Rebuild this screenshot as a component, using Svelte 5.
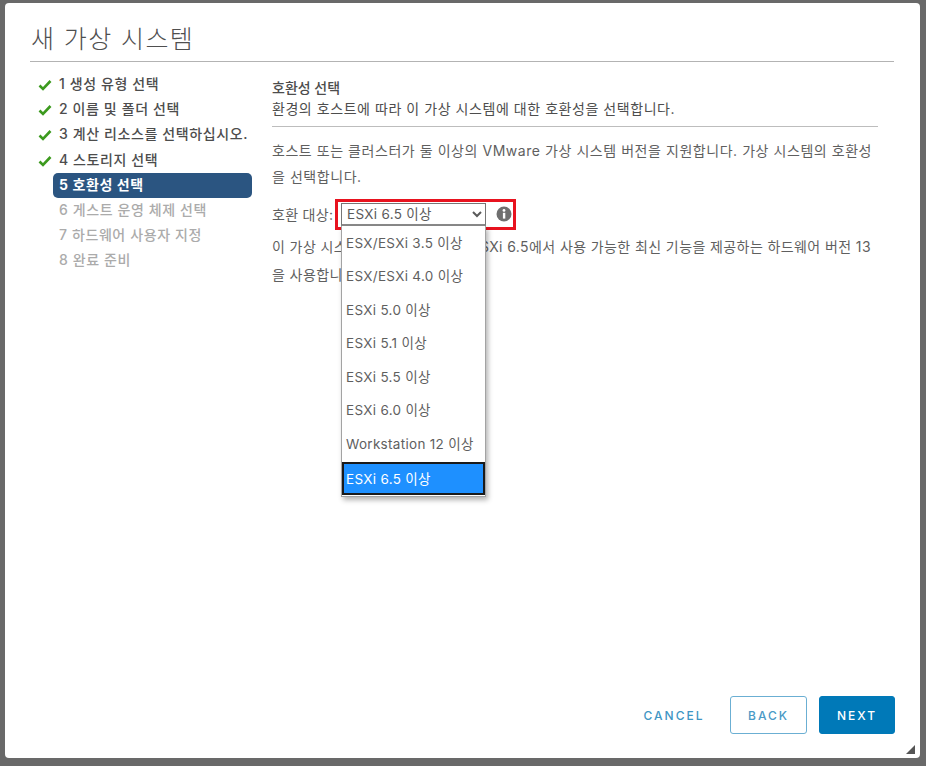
<script lang="ts">
	const steps = [
		{ label: '1 생성 유형 선택', state: 'done' },
		{ label: '2 이름 및 폴더 선택', state: 'done' },
		{ label: '3 계산 리소스를 선택하십시오.', state: 'done' },
		{ label: '4 스토리지 선택', state: 'done' },
		{ label: '5 호환성 선택', state: 'active' },
		{ label: '6 게스트 운영 체제 선택', state: 'todo' },
		{ label: '7 하드웨어 사용자 지정', state: 'todo' },
		{ label: '8 완료 준비', state: 'todo' }
	];

	const versions = [
		'ESX/ESXi 3.5 이상',
		'ESX/ESXi 4.0 이상',
		'ESXi 5.0 이상',
		'ESXi 5.1 이상',
		'ESXi 5.5 이상',
		'ESXi 6.0 이상',
		'Workstation 12 이상',
		'ESXi 6.5 이상'
	];
	const selected = 'ESXi 6.5 이상';
</script>

<div class="backdrop">
	<div class="modal">
		<h1>새 가상 시스템</h1>

		<div class="body">
			<ul class="steps">
				{#each steps as step}
					<li class={step.state}>
						{#if step.state === 'done'}
							<svg class="check" viewBox="0 0 14 12" width="14" height="12">
								<path d="M1.5 6.5 L5 10 L12.5 2" fill="none" stroke="#3c9a1e" stroke-width="2.6" />
							</svg>
						{/if}
						<span class="pill">{step.label}</span>
					</li>
				{/each}
			</ul>

			<div class="content">
				<div class="head">
					<h2>호환성 선택</h2>
					<p>환경의 호스트에 따라 이 가상 시스템에 대한 호환성을 선택합니다.</p>
				</div>

				<p class="text">호스트 또는 클러스터가 둘 이상의 VMware 가상 시스템 버전을 지원합니다. 가상 시스템의 호환성을 선택합니다.</p>

				<div class="field">
					<label for="compat">호환 대상:</label>
					<div class="select-wrap">
						<select id="compat" value={selected}>
							{#each versions as v}
								<option value={v}>{v}</option>
							{/each}
						</select>
						<span class="highlight"></span>
						<ul class="popup">
							{#each versions as v}
								<li class:sel={v === selected}>{v}</li>
							{/each}
						</ul>
					</div>
					<svg class="info" viewBox="0 0 16 16" width="16" height="16">
						<circle cx="8" cy="8" r="7.5" fill="#6f6f6f" />
						<rect x="6.9" y="6.8" width="2.4" height="5.8" fill="#fff" />
						<circle cx="8" cy="4.4" r="1.4" fill="#fff" />
					</svg>
				</div>

				<p class="text note">이 가상 시스템은 ESXi 6.5 호환 ESXi 6.5에서 사용 가능한 최신 기능을 제공하는 하드웨어 버전 13을 사용합니다.</p>
			</div>
		</div>

		<div class="footer">
			<button class="flat">CANCEL</button>
			<button class="outline">BACK</button>
			<button class="primary">NEXT</button>
		</div>

		<svg class="grip" viewBox="0 0 10 10" width="9" height="9">
			<path d="M10 0 L10 10 L0 10 Z" fill="#555" />
		</svg>
	</div>
</div>

<style>
	:global(body) {
		margin: 0;
		background: #666;
	}

	.backdrop {
		height: 766px;
		box-sizing: border-box;
		padding: 3px 6px 8px 5px;
		background: #696969;
		font-family: Inter, "Noto Sans CJK KR", sans-serif;
		color: #5f5f5f;
		font-size: 14px;
		overflow: hidden;
	}

	.modal {
		position: relative;
		height: 100%;
		box-sizing: border-box;
		padding: 0 26px 0 25px;
		background: #fff;
		border-radius: 4px;
		display: flex;
		flex-direction: column;
	}

	h1 {
		margin: 0;
		height: 59px;
		box-sizing: border-box;
		padding: 18px 0 0 1px;
		border-bottom: 1px solid #b3b3b3;
		font-size: 25px;
		line-height: 36px;
		font-weight: 300;
		letter-spacing: 1.4px;
		color: #4f4f4f;
	}

	.body {
		flex: 1;
		display: flex;
	}

	.steps {
		list-style: none;
		margin: 10px 0 0 8px;
		padding: 0;
		width: 214px;
		flex: none;
	}

	.steps li {
		position: relative;
		height: 25.2px;
		padding-left: 15px;
		font-weight: 500;
		color: #4d4d4d;
		letter-spacing: 0.6px;
	}

	.pill {
		display: block;
		padding: 0 0 1px 6px;
		line-height: 24px;
		border-radius: 5px;
		white-space: nowrap;
	}

	.active .pill {
		background: #2b5581;
		color: #fff;
		font-weight: 700;
	}

	.todo {
		color: #ababab !important;
	}

	.check {
		position: absolute;
		left: 0;
		top: 7px;
	}

	.content {
		margin-left: 20px;
		width: 606px;
		flex: none;
	}

	.head {
		padding-top: 13px;
		height: 51px;
		border-bottom: 1px solid #bdbdbd;
		line-height: 21px;
	}

	h2 {
		margin: 0;
		font-size: 14px;
		font-weight: 500;
		color: #4d4d4d;
		line-height: 25px;
		height: 23px;
	}

	.head p {
		margin: 0;
		color: #4d4d4d;
		letter-spacing: 0.55px;
	}

	.text {
		margin: 0;
		line-height: 26px;
		letter-spacing: 0.55px;
	}

	.head + .text {
		margin-top: 11px;
	}

	.field {
		display: flex;
		align-items: center;
		height: 26px;
		margin-top: 11px;
	}

	.field label {
		width: 69px;
		flex: none;
		letter-spacing: 0.3px;
		white-space: nowrap;
	}

	.select-wrap {
		position: relative;
		width: 145px;
		height: 23px;
		font-size: 13.5px;
	}

	select {
		display: block;
		width: 100%;
		height: 100%;
		box-sizing: border-box;
		padding-left: 1px;
		border: 1px solid #767676;
		border-bottom: 2px solid #8a8a8a;
		border-radius: 0;
		background: #fff;
		font: inherit;
		letter-spacing: 0.3px;
		color: #5a5a5a;
	}

	.highlight {
		position: absolute;
		left: -6px;
		right: -30px;
		top: -4px;
		bottom: -4px;
		border: 3px solid #e8131f;
		box-sizing: border-box;
		pointer-events: none;
	}

	.popup {
		position: absolute;
		left: 0;
		top: 23px;
		z-index: 2;
		width: 145px;
		box-sizing: border-box;
		margin: 0;
		padding: 1px 0 1px;
		list-style: none;
		background: #fff;
		border: 1px solid #a3a3a3;
		border-top: none;
		box-shadow: 2px 3px 5px rgba(0, 0, 0, 0.3);
	}

	.popup li {
		height: 33.6px;
		line-height: 33px;
		padding-left: 4px;
		white-space: nowrap;
		letter-spacing: 0.3px;
	}

	.popup li.sel {
		box-sizing: border-box;
		background: #1e90ff;
		color: #fff;
		border: 2px solid #1a1a1a;
		padding-left: 2px;
		line-height: 30px;
	}

	.info {
		margin-left: 10px;
	}

	.text.note {
		margin-top: 6px;
		line-height: 28px;
		letter-spacing: 0.4px;
	}

	.footer {
		display: flex;
		justify-content: flex-end;
		gap: 12px;
		padding-bottom: 24px;
		margin-right: -1px;
	}

	button {
		height: 38px;
		box-sizing: border-box;
		border-radius: 3px;
		font-family: Inter, sans-serif;
		font-size: 12px;
		font-weight: 500;
		letter-spacing: 2px;
	}

	.flat {
		width: 88px;
		border: none;
		background: none;
		color: #3f96c4;
		padding: 0;
	}

	.outline {
		width: 77px;
		background: #fff;
		border: 1px solid #6bafd3;
		color: #4a9ac6;
	}

	.primary {
		width: 76px;
		background: #0079b8;
		border: 1px solid #0079b8;
		color: #fff;
	}

	.grip {
		position: absolute;
		right: 5px;
		bottom: 4px;
	}
</style>
